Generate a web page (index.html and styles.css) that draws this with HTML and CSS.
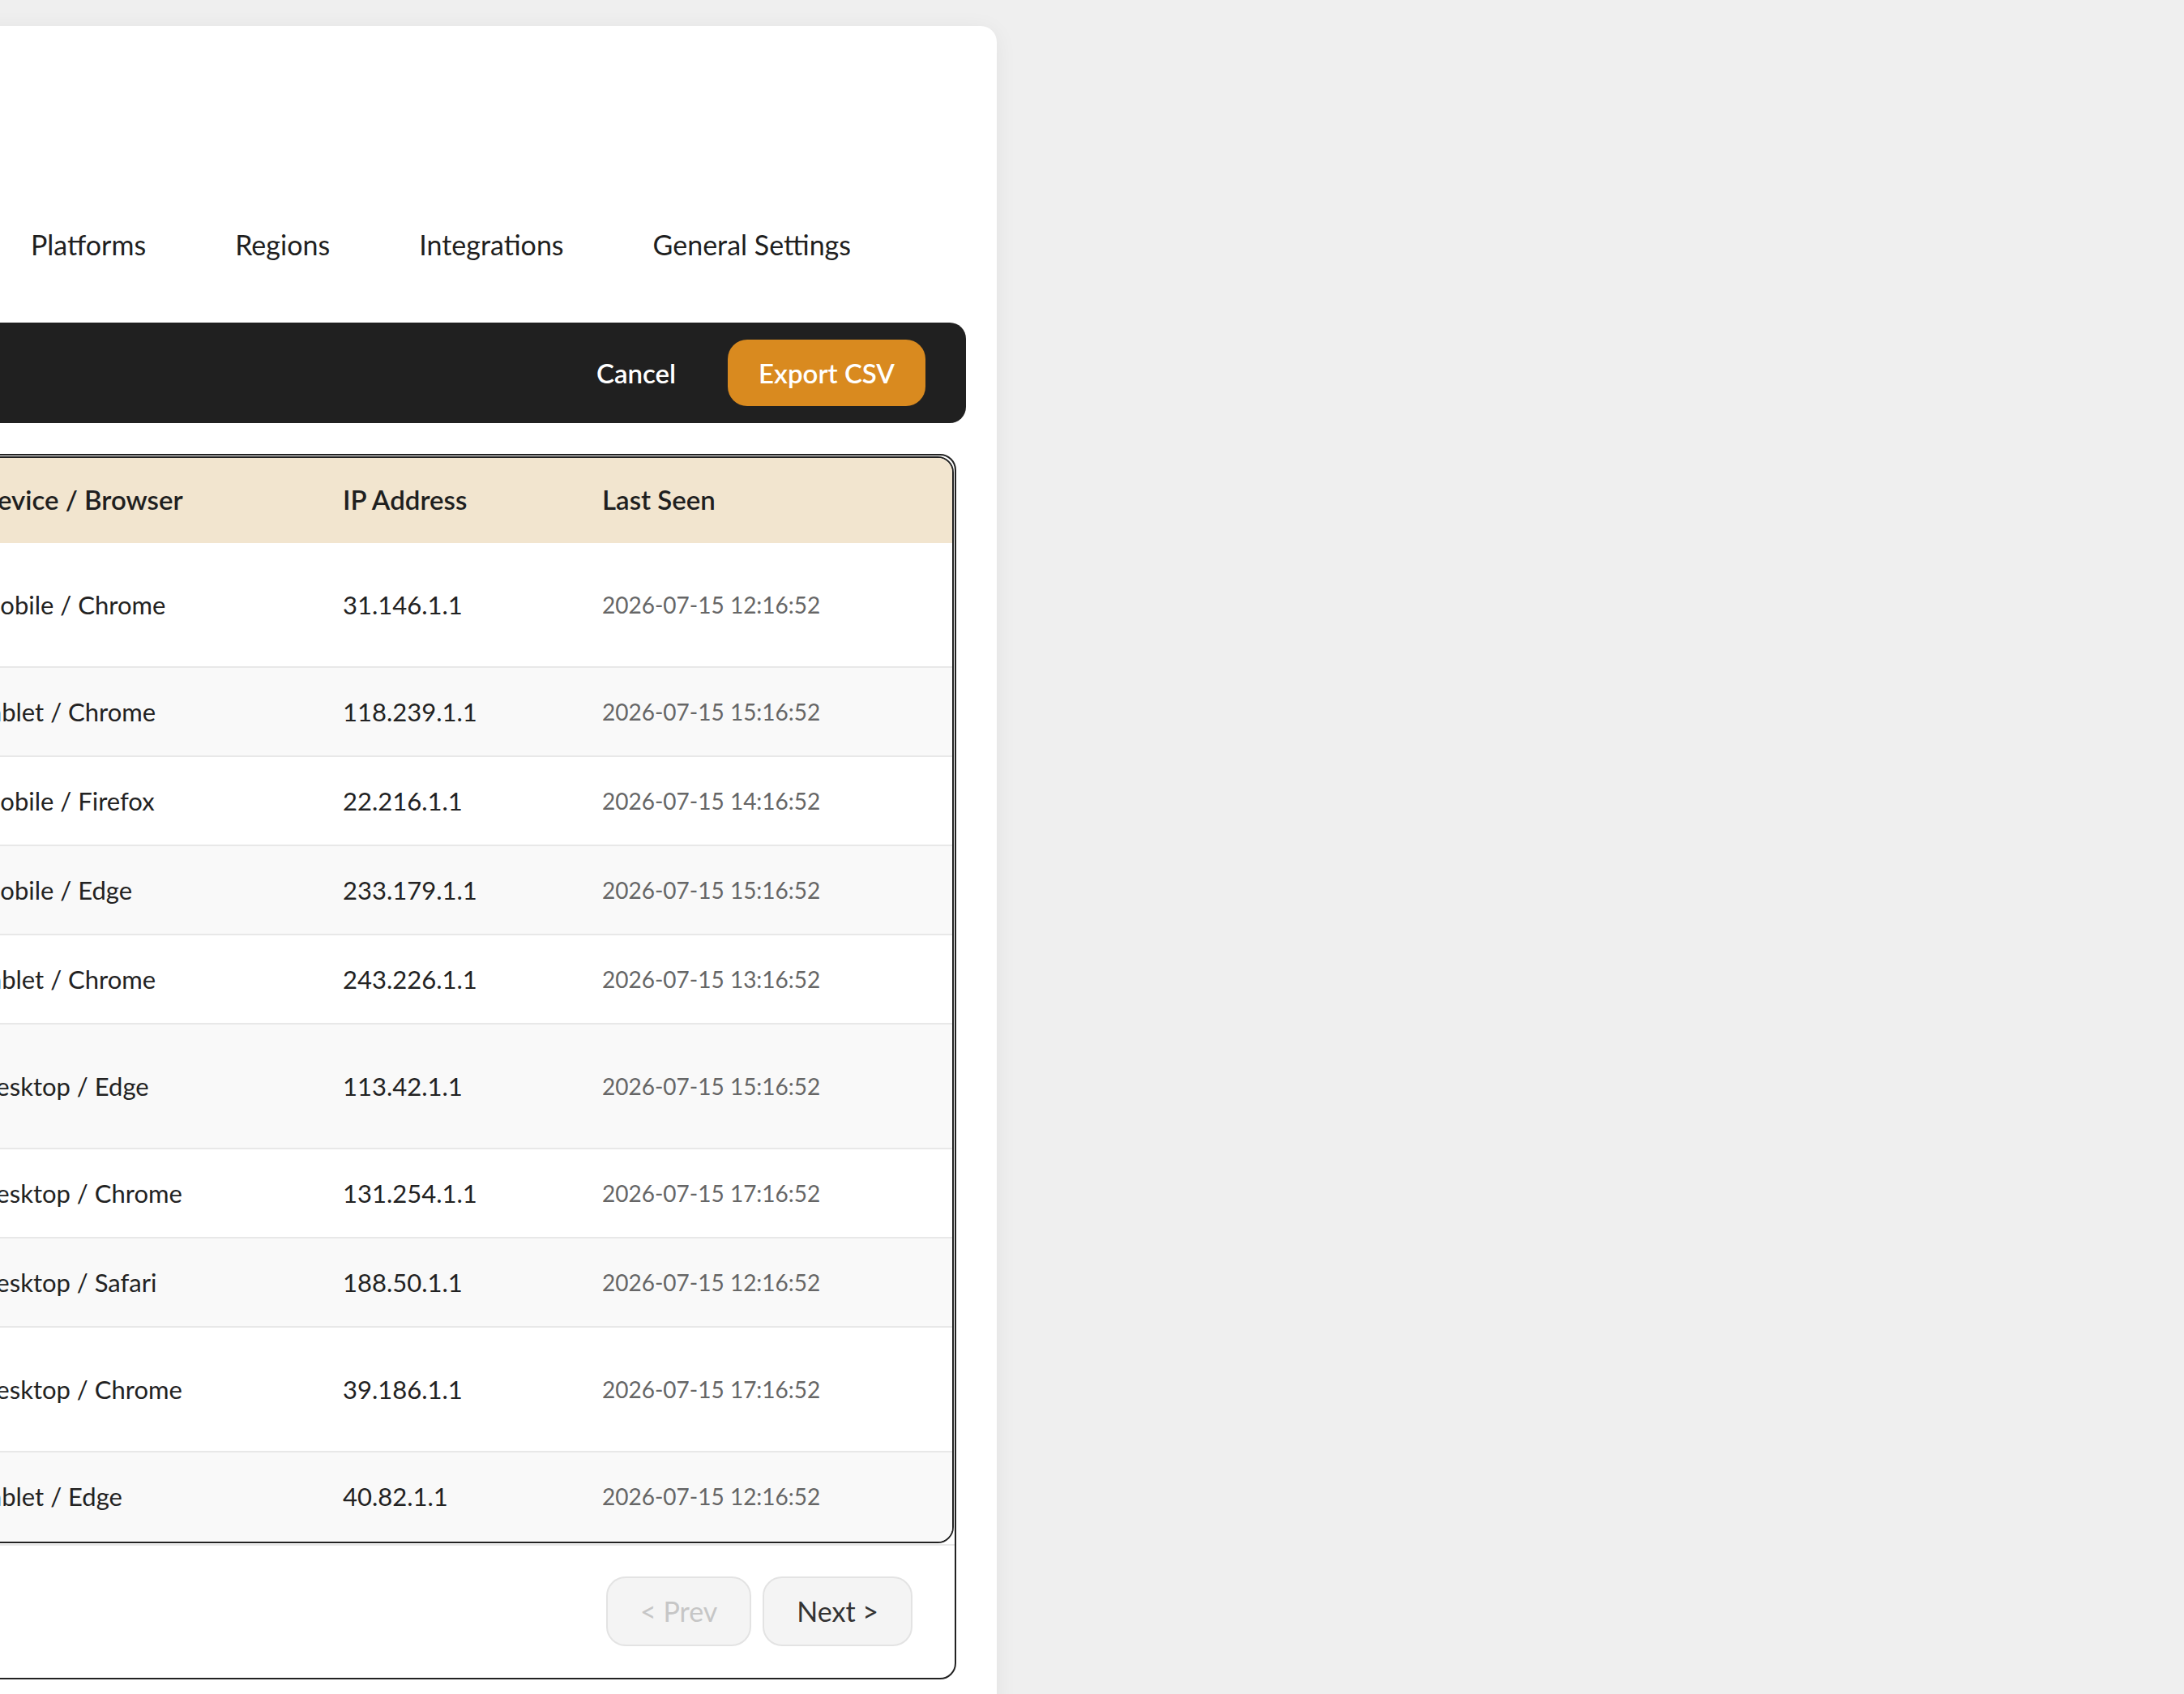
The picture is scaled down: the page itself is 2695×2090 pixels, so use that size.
FILE: index.html
```html
<!DOCTYPE html>
<html lang="en">
<head>
<meta charset="utf-8">
<title>Device Activity</title>
<link rel="stylesheet" href="styles.css">
</head>
<body>
<div class="page">
  <section class="card">
    <nav class="tabs">
      <a class="tab">Platforms</a>
      <a class="tab">Regions</a>
      <a class="tab">Integrations</a>
      <a class="tab">General Settings</a>
    </nav>
    <div class="toolbar">
      <button class="btn-ghost">Cancel</button>
      <button class="btn-primary">Export CSV</button>
    </div>
    <div class="table-wrap">
      <div class="table-box">
        <table class="grid">
          <colgroup>
            <col class="col-device">
            <col class="col-ip">
            <col class="col-seen">
          </colgroup>
          <thead>
            <tr><th>Device / Browser</th><th>IP Address</th><th>Last Seen</th></tr>
          </thead>
          <tbody>
            <tr class="is-tall"><td>Mobile / Chrome</td><td>31.146.1.1</td><td class="date">2026-07-15 12:16:52</td></tr>
            <tr><td>Tablet / Chrome</td><td>118.239.1.1</td><td class="date">2026-07-15 15:16:52</td></tr>
            <tr><td>Mobile / Firefox</td><td>22.216.1.1</td><td class="date">2026-07-15 14:16:52</td></tr>
            <tr><td>Mobile / Edge</td><td>233.179.1.1</td><td class="date">2026-07-15 15:16:52</td></tr>
            <tr><td>Tablet / Chrome</td><td>243.226.1.1</td><td class="date">2026-07-15 13:16:52</td></tr>
            <tr class="is-tall"><td>Desktop / Edge</td><td>113.42.1.1</td><td class="date">2026-07-15 15:16:52</td></tr>
            <tr><td>Desktop / Chrome</td><td>131.254.1.1</td><td class="date">2026-07-15 17:16:52</td></tr>
            <tr><td>Desktop / Safari</td><td>188.50.1.1</td><td class="date">2026-07-15 12:16:52</td></tr>
            <tr class="is-tall"><td>Desktop / Chrome</td><td>39.186.1.1</td><td class="date">2026-07-15 17:16:52</td></tr>
            <tr><td>Tablet / Edge</td><td>40.82.1.1</td><td class="date">2026-07-15 12:16:52</td></tr>
          </tbody>
        </table>
      </div>
      <div class="pager">
        <button class="pager-btn" disabled>&lt; Prev</button>
        <button class="pager-btn">Next &gt;</button>
      </div>
    </div>
  </section>
</div>
</body>
</html>
```

FILE: styles.css
```css
html, body {
  margin: 0;
  padding: 0;
}

body {
  background: #efefef;
  font-family: "Lato", "Noto Sans", sans-serif;
  color: #1f1f1f;
  overflow: hidden;
}

.page {
  padding-top: 32px;
}

.card {
  box-sizing: border-box;
  width: 1335px;
  margin-left: -105px;
  background: #ffffff;
  border-radius: 20px;
  box-shadow: 0 4px 28px rgba(0, 0, 0, 0.06);
  padding: 220px 38px 48px 48px;
}

.tabs {
  display: flex;
  gap: 110px;
  padding-left: 95px;
}

.tab {
  font-size: 34px;
  line-height: 51px;
  padding: 24px 0;
  color: #1f1f1f;
  text-decoration: none;
  white-space: nowrap;
}

.toolbar {
  display: flex;
  align-items: center;
  justify-content: flex-end;
  gap: 24px;
  margin-top: 47px;
  background: #202020;
  border-radius: 20px;
  padding: 21px 50px 21px 48px;
}

.btn-ghost,
.btn-primary {
  font-family: inherit;
  font-size: 33px;
  font-weight: 600;
  line-height: 50px;
  border: 0;
  color: #ffffff;
  padding: 16px 38px;
  border-radius: 24px;
  cursor: pointer;
}

.btn-ghost {
  background: transparent;
  padding: 16px 40px;
}

.btn-primary {
  background: #d98a1f;
}

.table-wrap {
  margin-top: 38px;
  margin-right: 12px;
  border: 2px solid #222222;
  border-radius: 20px;
}

.table-box {
  margin: 1px;
  border: 2px solid #222222;
  border-radius: 20px;
  overflow: hidden;
}

.grid {
  width: 100%;
  table-layout: fixed;
  border-collapse: separate;
  border-spacing: 0;
}

.col-device { width: 451px; }
.col-ip { width: 320px; }

.grid th {
  background: #f2e5cf;
  font-size: 33px;
  font-weight: 600;
  line-height: 49.5px;
  padding: 27px 24px 28px;
  text-align: left;
  white-space: nowrap;
  color: #1f1f1f;
}

.grid td {
  font-size: 31px;
  line-height: 48px;
  padding: 30px 24px;
  border-bottom: 2px solid #e8e8e8;
  vertical-align: middle;
  white-space: nowrap;
  overflow: hidden;
  color: #222222;
}

.grid tr.is-tall td {
  padding-top: 52px;
  padding-bottom: 52px;
}

.grid tbody tr:nth-child(even) td {
  background: #f9f9f9;
}

.grid tbody tr:last-child td {
  border-bottom: 0;
  padding-bottom: 32px;
}

.grid td.date {
  font-size: 28px;
  color: #666666;
}

.pager {
  display: flex;
  justify-content: flex-end;
  gap: 14px;
  padding: 38px 52px 39px;
  border-top: 2px solid #e8e8e8;
}

.pager-btn {
  font-family: inherit;
  font-size: 34px;
  line-height: 48px;
  padding: 17px 40px;
  border: 2px solid #e3e3e3;
  background: #f4f4f4;
  border-radius: 24px;
  color: #333333;
  cursor: pointer;
}

.pager-btn:disabled {
  color: #c6c6c6;
  cursor: default;
}
```
